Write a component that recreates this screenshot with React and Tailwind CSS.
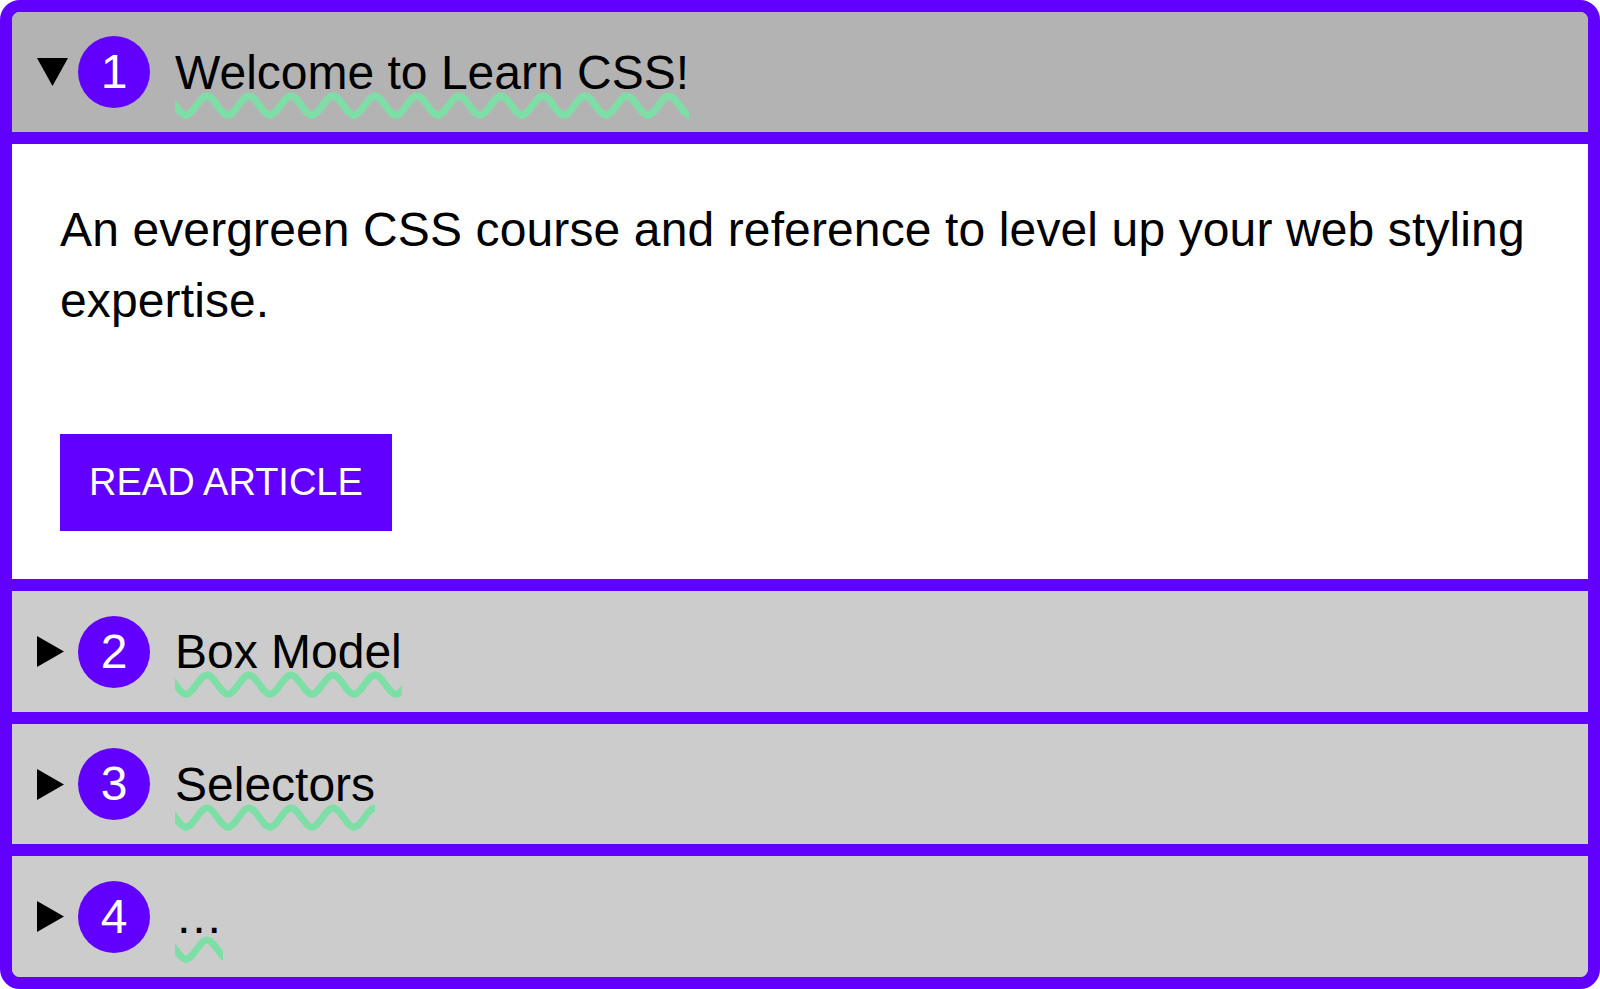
import { useState } from "react";

const lessons = [
    { num: 1, title: "Welcome to Learn CSS!" },
    { num: 2, title: "Box Model" },
    { num: 3, title: "Selectors" },
    { num: 4, title: "…" },
];

// wavy green underline drawn under each title
const Wave = ({ id }) => (
    <svg
        className="absolute left-0 top-[47px] w-full h-[28px] pointer-events-none"
        aria-hidden="true"
    >
        <defs>
            <pattern id={id} x="11" width="42" height="28" patternUnits="userSpaceOnUse">
                <path
                    d="M-1 23.5 C7.6 23.5 13.4 4 21 4 C28.6 4 34.4 23.5 43 23.5"
                    fill="none"
                    stroke="#7ddfa6"
                    strokeWidth="7"
                />
            </pattern>
        </defs>
        <rect width="100%" height="28" fill={`url(#${id})`} />
    </svg>
);

const Marker = ({ open }) => (
    <div className="w-[31px] flex items-center">
        {open ? (
            <svg width="31" height="28" viewBox="0 0 31 28">
                <polygon points="0,0 31,0 15.5,28" fill="#000" />
            </svg>
        ) : (
            <svg width="27" height="31" viewBox="0 0 27 31">
                <polygon points="0,0 27,15.5 0,31" fill="#000" />
            </svg>
        )}
    </div>
);

const Summary = ({ lesson, open, onClick, className }) => (
    <button
        onClick={onClick}
        className={`${className} w-full flex items-center pl-[25px] text-left ${
            open ? "bg-[#b3b3b3]" : "bg-[#cccccc]"
        }`}
    >
        <Marker open={open} />
        <div className="ml-[10px] w-[72px] h-[72px] rounded-full bg-[#6200ff] text-white text-[48px] leading-none flex items-center justify-center">
            {lesson.num}
        </div>
        <span className="relative inline-block ml-[25px] text-[48px] leading-[normal] text-black">
            {lesson.title}
            <Wave id={`wave-${lesson.num}`} />
        </span>
    </button>
);

const App = () => {
    const [openItem, setOpenItem] = useState(1);

    const toggle = (num) => setOpenItem(openItem === num ? 0 : num);

    return (
        <div className="w-[1600px] h-[989px] bg-white font-['Liberation_Sans',Arial,sans-serif]">
            <div className="h-full flex flex-col border-12 border-[#6200ff] rounded-[20px] overflow-hidden bg-[#cccccc]">
                {/* LESSON 1 */}
                <div>
                    <Summary
                        lesson={lessons[0]}
                        open={openItem === 1}
                        onClick={() => toggle(1)}
                        className="h-[132px] border-b-12 border-[#6200ff]"
                    />
                    {openItem === 1 && (
                        <div className="h-[447px] bg-white px-12 pt-[50px] border-b-12 border-[#6200ff]">
                            <p className="text-[48px] leading-[71px] tracking-[0.0025em] text-black">
                                An evergreen CSS course and reference to level up your web styling expertise.
                            </p>
                            <button className="mt-[98px] h-[97px] px-[29px] bg-[#6200ff] text-white text-[38px] flex items-center">
                                READ ARTICLE
                            </button>
                        </div>
                    )}
                </div>

                {/* OTHER LESSONS */}
                <Summary
                    lesson={lessons[1]}
                    open={openItem === 2}
                    onClick={() => toggle(2)}
                    className="h-[133px] border-b-12 border-[#6200ff]"
                />
                <Summary
                    lesson={lessons[2]}
                    open={openItem === 3}
                    onClick={() => toggle(3)}
                    className="h-[132px] border-b-12 border-[#6200ff]"
                />
                <Summary
                    lesson={lessons[3]}
                    open={openItem === 4}
                    onClick={() => toggle(4)}
                    className="flex-1"
                />
            </div>
        </div>
    );
};

export default App;
